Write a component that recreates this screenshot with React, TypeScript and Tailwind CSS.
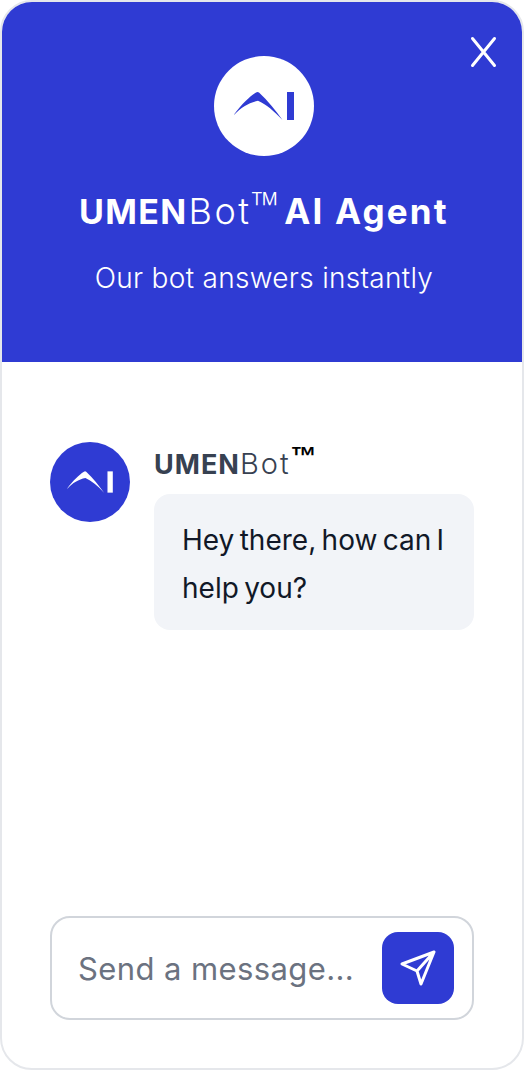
import React from "react";

function Logo({ className, color }: { className: string; color: string }) {
  return (
    <svg className={className} viewBox="0 0 100 100" fill="none">
      <path
        d="M20 58.5 C28 48 35 41 42 36.5 Q43.5 35.5 45 36.5 C54 45 62 55 68.5 64 C60 55 52 48.5 44 44.8 C35 46.5 27 51.5 20.5 58.5 Z"
        fill={color}
      />
      <rect x="73" y="36" width="7" height="28" fill={color} />
    </svg>
  );
}

export default function App() {
  return (
    <div className="w-[524px] h-[1070px] bg-white font-['Inter',sans-serif]">
      <div className="relative flex h-full w-full flex-col overflow-hidden rounded-[32px] border-2 border-[#e5e7eb] bg-white">
        <header className="relative flex h-[360px] shrink-0 flex-col items-center bg-[#2f3bd3] pl-[4px] pt-[54px] text-white">
          <button className="absolute right-[18px] top-[30px] text-white">
            <svg className="h-[40px] w-[40px]" viewBox="0 0 40 40" fill="none" stroke="currentColor" strokeWidth="3" strokeLinecap="round">
              <path d="M8.5 6.5 L30.5 33.5 M30.5 6.5 L8.5 33.5" />
            </svg>
          </button>
          <div className="flex h-[100px] w-[100px] items-center justify-center rounded-full bg-white">
            <Logo className="h-[100px] w-[100px]" color="#2f3bd3" />
          </div>
          <h1 className="mt-[29px] flex h-[48px] items-baseline whitespace-nowrap leading-[48px]">
            <span className="text-[34px] font-bold tracking-[1.3px]">UMEN</span>
            <span className="ml-[1px] text-[36px] font-light tracking-[2.6px]">Bot</span>
            <span className="relative top-[-5px] font-['Open_Sans',sans-serif] text-[38px] font-light leading-[48px]">™</span>
            <span className="ml-[5px] text-[35px] font-bold tracking-[2.2px]">AI Agent</span>
          </h1>
          <p className="mt-[27px] text-[28px] font-light leading-[36px] tracking-[0.3px]">Our bot answers instantly</p>
        </header>

        <main className="flex flex-1 flex-col justify-between px-[48px] pb-[48px] pt-[80px]">
          <div className="flex gap-[24px]">
            <div className="flex h-[80px] w-[80px] shrink-0 items-center justify-center rounded-full bg-[#2f3bd3]">
              <Logo className="h-[76px] w-[76px]" color="#ffffff" />
            </div>
            <div className="flex w-[320px] flex-col">
              <div className="flex h-[52px] items-baseline whitespace-nowrap pt-[2px] leading-[40px] text-[#374151]">
                <span className="text-[27px] font-bold tracking-[1px]">UMEN</span>
                <span className="text-[29px] font-light tracking-[2px]">Bot</span>
                <span className="relative top-[-9px] font-['Liberation_Sans',sans-serif] text-[26px] font-bold text-black">™</span>
              </div>
              <div className="rounded-[16px] bg-[#f2f4f8] pb-[18px] pl-[28px] pr-[20px] pt-[22px] text-[28px] leading-[48px] text-[#111827] [word-spacing:-2.5px]">
                Hey there, how can I help you?
              </div>
            </div>
          </div>

          <div className="flex h-[104px] items-center justify-between rounded-[20px] border-2 border-[#d1d5db] pl-[26px] pr-[18px]">
            <span className="pt-[1px] text-[31px] leading-[40px] tracking-[0.4px] text-[#6b7280]">Send a message...</span>
            <button className="flex h-[72px] w-[72px] items-center justify-center rounded-[16px] bg-[#2f3bd3] text-white">
              <svg className="h-[40px] w-[40px]" viewBox="0 0 40 40" fill="none" stroke="currentColor" strokeWidth="3" strokeLinecap="round" strokeLinejoin="round">
                <path d="M36 4 L4 16 L19 23 L23 36 Z M36 4 L19 23" />
              </svg>
            </button>
          </div>
        </main>
      </div>
    </div>
  );
}
